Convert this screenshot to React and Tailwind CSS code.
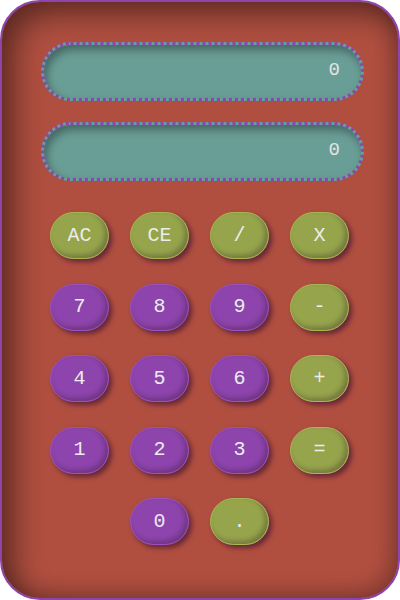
import React from "react";

const rows = [
  [["AC", "g"], ["CE", "g"], ["/", "g"], ["X", "g"]],
  [["7", "p"], ["8", "p"], ["9", "p"], ["-", "g"]],
  [["4", "p"], ["5", "p"], ["6", "p"], ["+", "g"]],
  [["1", "p"], ["2", "p"], ["3", "p"], ["=", "g"]],
  [null, ["0", "p"], [".", "g"], null],
];

const Key = ({ label, kind }) => (
  <button
    className={
      kind === "g"
        ? "h-[47px] w-[59px] rounded-[24px] border border-[#a9b852] bg-[#96a44c] text-[20px] text-[#ececec] shadow-[3px_3px_5px_rgba(70,20,50,0.7),inset_-3px_-3px_5px_rgba(40,20,30,0.3)]"
        : "h-[47px] w-[59px] rounded-[24px] border border-[#9c52bc] bg-[#8e44ad] text-[20px] text-[#ececec] shadow-[3px_3px_5px_rgba(70,20,50,0.7),inset_-3px_-3px_5px_rgba(40,20,30,0.3)]"
    }
  >
    {label}
  </button>
);

const Display = ({ value }) => (
  <div className="flex h-[59px] items-center justify-end rounded-full border-[3px] border-dotted border-[#8e44ad] bg-[#699e96] pb-[3px] pr-[21px] text-[19px] text-[#e4e4e4] shadow-[inset_3px_5px_8px_rgba(0,0,0,0.35)]">
    {value}
  </div>
);

export default function App() {
  return (
    <div
      className="h-[600px] w-[400px] bg-white"
      style={{ fontFamily: '"Liberation Mono", monospace' }}
    >
      <div className="h-full w-full rounded-[40px] border-2 border-[#8e44ad] bg-[#b04f40] pt-10 shadow-[inset_12px_12px_30px_rgba(0,0,0,0.45),inset_-6px_-6px_20px_rgba(0,0,0,0.2)]">
        <div className="ml-[39px] w-[323px] space-y-[21px]">
          <Display value="0" />
          <Display value="0" />
        </div>
        <div className="ml-[48px] mt-[31px] grid w-[299px] grid-cols-4 gap-x-[21px] gap-y-[24.5px]">
          {rows.flat().map((k, i) =>
            k ? <Key key={i} label={k[0]} kind={k[1]} /> : <div key={i} />
          )}
        </div>
      </div>
    </div>
  );
}
